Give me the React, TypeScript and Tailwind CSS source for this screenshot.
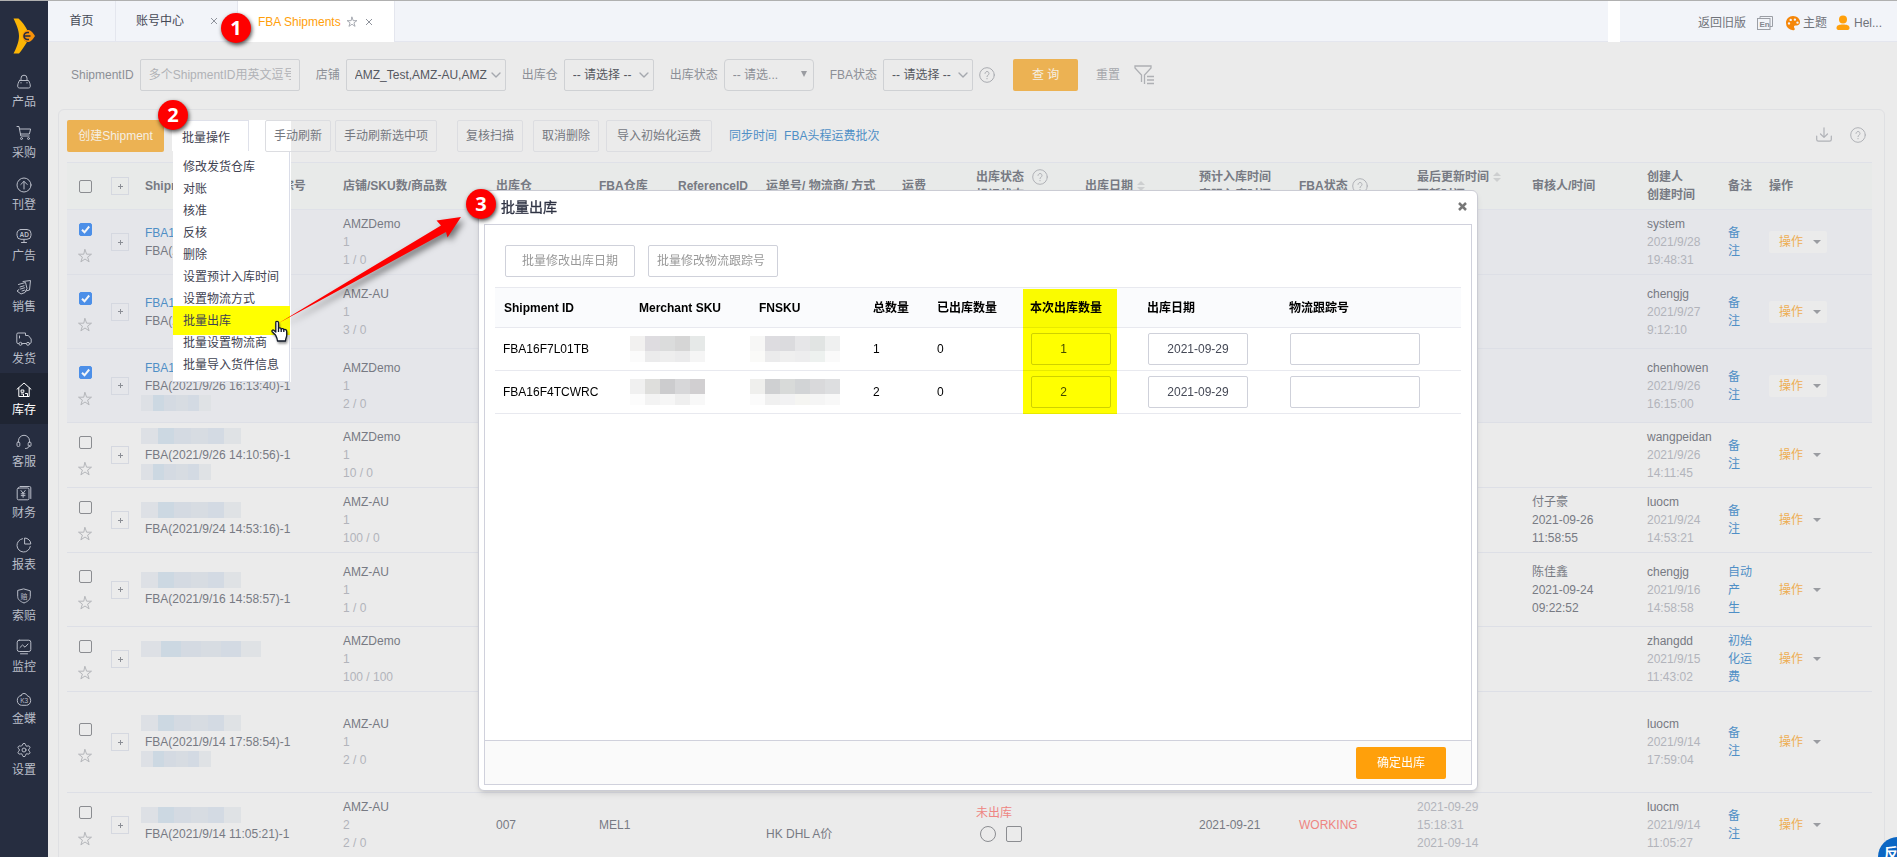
import React from 'react';
import { ChevronDown, Settings } from 'lucide-react';

type IconProps = { className?: string };

const Glyph: React.FC<{ className?: string; children: React.ReactNode }> = ({ className = 'size-4', children }) => (
  <svg viewBox="0 0 16 16" className={className} fill="none" stroke="currentColor" strokeWidth="1" strokeLinecap="round" strokeLinejoin="round" aria-hidden="true">
    {children}
  </svg>
);

const HelpIcon: React.FC<IconProps> = ({ className = 'size-4' }) => (
  <Glyph className={className}>
    <circle cx="8" cy="8" r="7.3" />
    <path d="M6 6.4a2 2 0 1 1 3 1.8c-.7.4-1 .7-1 1.4" />
    <path d="M8 11.4v.4" />
  </Glyph>
);

const StarIcon: React.FC<IconProps> = ({ className = 'size-4' }) => (
  <Glyph className={className}>
    <path d="M8 1.6l1.6 4.6h4.9l-3.9 2.9 1.5 4.7L8 11l-4.1 2.8 1.5-4.7-3.9-2.9h4.9z" />
  </Glyph>
);

const Sorter = () => (
  <svg viewBox="0 0 8 10" className="w-2 h-2.5" fill="#cdcfd0" aria-hidden="true">
    <path d="M4 0l4 4H0zM4 10l4-4H0z" />
  </svg>
);

const menu = [
  { label: '产品', icon: <Glyph><path d="M5 6.5V4.2a3 3 0 0 1 6 0v2.3M3.5 6.500h9c1.300 2.200 1.800 4 1.800 5.700 0 1.300-.8 1.800-1.800 1.800h-9c-1 0-1.800-.5-1.800-1.800 0-1.700.5-3.500 1.800-5.700zM5 8.5v.5M11 8.5v.5" /></Glyph> },
  { label: '采购', icon: <Glyph><path d="M1 1.5h2l1.8 9.5h8.4M3.6 4h11l-1.2 5H4.4" /><circle cx="5.5" cy="13.5" r="1" /><circle cx="12.5" cy="13.5" r="1" /></Glyph> },
  { label: '刊登', icon: <Glyph><circle cx="8" cy="8" r="7" /><path d="M8 12V4.5M4.8 7.5L8 4.3l3.2 3.2" /></Glyph> },
  { label: '广告', icon: <Glyph><path d="M5 1.5h6a4 4 0 0 1 4 4v1.800a4 4 0 0 1-4 4H5a4 4 0 0 1-4-4V5.500a4 4 0 0 1 4-4zM5.500 14.500h5M8 11.500v3" /><text x="3.600" y="9" fontSize="6.500" fontWeight="bold" fill="currentColor" stroke="none">AD</text></Glyph> },
  { label: '销售', icon: <Glyph><path d="M7 2.500l7.500-1-1 9.500-3.500 1M2.500 5.500l7-2 1.500 6-2 4-4 1.500-4-3 2-1.500M4 8l4-1.200M4.500 10l4-1.200M6 12l2.500-.8" /></Glyph> },
  { label: '发货', icon: <Glyph><path d="M2.500 12.500H2A1.200 1.200 0 0 1 .8 11.300V3.200A1.200 1.200 0 0 1 2 2h7.500v2.500h2.800l2.900 3.500v3.300a1.200 1.200 0 0 1-1.200 1.200M6.500 12.500h3.500M3.500 5v2" /><circle cx="4.500" cy="12.800" r="1.500" /><circle cx="12" cy="12.800" r="1.500" /></Glyph> },
  { label: '库存', icon: <Glyph><path d="M1 7.200L8 1l7 6.200M2.800 6v8.500h10.400V6" /><path d="M5.500 8h2.300v2.300H5.500zM5.500 12h2v2M9.500 11.500h2V14" /></Glyph> },
  { label: '客服', icon: <Glyph><path d="M2.500 8V6.800a5.500 5.500 0 0 1 11 0V8M13.500 11.500c-.3 2-1.800 3-4 3" /><rect x="1" y="8" width="2.800" height="4.500" rx="1.200" /><rect x="12.200" y="8" width="2.800" height="4.500" rx="1.200" /></Glyph> },
  { label: '财务', icon: <Glyph><path d="M4 1.500h9.500a1.300 1.300 0 0 1 1.300 1.300v10.700" /><rect x="1.200" y="3" width="11.800" height="11.800" rx="1.300" /><path d="M5 5.500l2.100 2.800 2.100-2.800M7.100 8.300v4M5.200 8.800H9M5.200 10.600H9" /></Glyph> },
  { label: '报表', icon: <Glyph><path d="M6.500 1.700a6.700 6.700 0 1 0 7.800 7.800M9 1a6 6 0 0 1 5.800 6H9z" /></Glyph> },
  { label: '索赔', icon: <Glyph><path d="M8 1l6.300 1.800v5.700c0 3-2.500 5-6.300 6.500-3.800-1.500-6.300-3.500-6.300-6.500V2.800z" /><text x="4.500" y="10.800" fontSize="7" fill="currentColor" stroke="none">赔</text></Glyph> },
  { label: '监控', icon: <Glyph><rect x="1.200" y="1.200" width="13.600" height="11.300" rx="2" /><path d="M4 8.500l2.500-2.500 2.500 2.200L12 5M4.500 14.800h7" /></Glyph> },
  { label: '金蝶', icon: <Glyph><path d="M5 4.500a3.200 3.200 0 0 1 6 0 5 5 0 0 1 3.700 5c0 2.800-2 4.800-4.400 4.800H5.700c-2.400 0-4.400-2-4.400-4.800a5 5 0 0 1 3.700-5z" /><text x="4.200" y="11.500" fontSize="6.500" fill="currentColor" stroke="none">K3</text></Glyph> },
  { label: '设置', icon: <Settings className="size-4" strokeWidth={1.5} /> },
];

const Sidebar = () => (
  <aside className="w-12 shrink-0 bg-[#262d40] text-[#b9bdc8]">
    <a href="#home" aria-label="home" className="flex h-[63px] items-end justify-center pb-2.5">
      <svg viewBox="0 0 24 36" className="w-6 h-9" aria-hidden="true">
        <path d="M1.500.5h5C10 3.500 13 7.500 15.500 12.500c-5 1-6 9.500-.5 11.500C12 29 9.500 32.500 7 35.500H1.500C4 31 7 24 7 18S4 6 1.500.5z" fill="#fbb506" />
        <path d="M17 12c2.800 1.200 4.500 3.500 6 6-1.500 2.500-3.200 4.800-6 6-4 0-6.500-2.500-6.500-6s2.500-6 6.500-6z" fill="#f7920a" />
        <path d="M17 14.500h-1.500a3.500 3.500 0 0 0 0 7H17M12.500 18h6" stroke="#262d40" strokeWidth="1.600" fill="none" />
      </svg>
    </a>
    <nav className="flex h-[720px] flex-col">
      {menu.map((m) => (
        <a
          key={m.label}
          href={`#${m.label}`}
          className={`flex flex-1 flex-col items-center justify-center gap-1 pt-1 ${m.label === '库存' ? 'bg-[#1f2533] text-white' : ''}`}
        >
          {m.icon}
          <span className="leading-4">{m.label}</span>
        </a>
      ))}
    </nav>
  </aside>
);

const TopBar = () => (
  <header className="flex h-[41px] border-b border-[#e4e6ee] bg-[#f2f4f9] text-[#454956]">
    <a href="#tab1" className="flex w-[68px] items-center justify-center border-r border-[#e4e6ee]">首页</a>
    <a href="#tab2" className="flex w-[122px] items-center gap-[26px] border-r border-[#e4e6ee] pl-5">
      账号中心
      <svg viewBox="0 0 8 8" className="size-2 text-[#8f939c]" stroke="currentColor" aria-hidden="true"><path d="M1 1l6 6M7 1L1 7" /></svg>
    </a>
    <a href="#tab3" className="-mb-px flex w-[157px] items-center gap-[5px] border-r border-[#e4e6ee] bg-white pl-5 text-[#ffa00b]">
      FBA Shipments
      <StarIcon className="size-3 text-[#8f939c]" />
      <svg viewBox="0 0 8 8" className="ml-0.5 size-2 text-[#8f939c]" stroke="currentColor" aria-hidden="true"><path d="M1 1l6 6M7 1L1 7" /></svg>
    </a>
    <div className="-mb-px ml-auto w-3 bg-white" />
    <div className="flex w-[277px] items-center pl-[78px] pt-1 text-[#70737a]">
      <a href="#old">返回旧版</a>
      <svg viewBox="0 0 16 14" className="ml-[11px] h-3.5 w-4" fill="none" stroke="#9b9ea5" aria-hidden="true">
        <path d="M3 2.500V.5h12.500v10H13" />
        <rect x=".5" y="2.500" width="12.500" height="11" />
        <text x="2.500" y="11" fontSize="8" fontWeight="bold" fill="#85888f" stroke="none">En</text>
      </svg>
      <svg viewBox="0 0 16 16" className="ml-3 size-4" fill="#f58608" aria-hidden="true">
        <path fillRule="evenodd" d="M8 1c4 0 7 2.800 7 6 0 2.300-1.500 3.500-3.500 3.500-1.800 0-2.500 0-2.500 1.200s.8 1.300.8 2.300S9 15.300 8 15.300A7.100 7.100 0 0 1 1 8c0-4 3-7 7-7zM4 7.200a1.200 1.200 0 1 0 0 2.400 1.200 1.200 0 0 0 0-2.400zm1.700-3.500a1.200 1.200 0 1 0 0 2.400 1.200 1.200 0 0 0 0-2.400zm4.200-.3a1.200 1.200 0 1 0 0 2.400 1.200 1.200 0 0 0 0-2.400zm2.600 3a1.200 1.200 0 1 0 0 2.400 1.200 1.200 0 0 0 0-2.400z" />
      </svg>
      <span className="ml-0.5">主题</span>
      <svg viewBox="0 0 14 16" className="ml-[9px] h-4 w-3.5" fill="#ffa00b" aria-hidden="true">
        <circle cx="7" cy="4.500" r="4" />
        <path d="M.5 13c0-3 3-3.500 6.500-3.500s6.500.5 6.500 3.500c0 1.500-1 2-2.500 2H3C1.500 15 .5 14.500.5 13z" />
      </svg>
      <span className="ml-1">Hel...</span>
    </div>
  </header>
);

const SelectBox: React.FC<{ id: string; value: string; className: string }> = ({ id, value, className }) => (
  <div className={`relative h-8 ${className}`}>
    <select id={id} className="h-full w-full appearance-none rounded-xs border border-[#cfd1d4] pl-2 pr-4 text-[#55585f]">
      <option>{value}</option>
    </select>
    <ChevronDown className="pointer-events-none absolute right-0.5 top-2 size-4 text-[#a5a8ae]" strokeWidth={2} />
  </div>
);

const FilterBar = () => (
  <form className="flex items-center gap-4 pb-[18px] pl-[23px] pt-[17px] text-[#8c8f96]">
    <div className="flex items-center gap-1.5">
      <label htmlFor="sid">ShipmentID</label>
      <input id="sid" placeholder="多个ShipmentID用英文逗号分隔" className="h-8 w-40 rounded-xs border border-[#cfd1d4] px-2 placeholder:text-[#b0b2b6]" />
    </div>
    <div className="flex items-center gap-1.5">
      <label htmlFor="store">店铺</label>
      <SelectBox id="store" value="AMZ_Test,AMZ-AU,AMZ" className="w-40" />
    </div>
    <div className="flex items-center gap-1.5">
      <label htmlFor="whs">出库仓</label>
      <SelectBox id="whs" value="-- 请选择 --" className="w-[90px]" />
    </div>
    <div className="flex items-center gap-1.5">
      <label htmlFor="outState">出库状态</label>
      <div className="relative h-8 w-[90px]">
        <select id="outState" className="h-full w-full appearance-none rounded border border-[#cfd1d4] pl-2 text-[#8c8f96]">
          <option>-- 请选...</option>
        </select>
        <svg viewBox="0 0 6 6" className="pointer-events-none absolute right-[7px] top-3 size-1.5" fill="#9a9ca1" aria-hidden="true"><path d="M0 0h6L3 6z" /></svg>
      </div>
    </div>
    <div className="flex items-center gap-1.5">
      <label htmlFor="fbaState">FBA状态</label>
      <SelectBox id="fbaState" value="-- 请选择 --" className="w-[90px]" />
      <HelpIcon className="size-4 text-[#a9abb0]" />
    </div>
    <button type="button" className="ml-0.5 h-8 w-[65px] rounded-xs bg-[#ecb253] text-[#f5efe4]">查 询</button>
    <button type="button" className="ml-0.5 text-[#a5a7ac]">重置</button>
    <svg viewBox="0 0 20 20" className="-ml-0.5 size-5" fill="none" stroke="#aeb0b4" strokeWidth="1.300" aria-hidden="true">
      <path d="M10.500 19V10l6.500-7V1H1v2l6.500 7v7M13 11.500h7M13 15h7M13 18.500h7" />
    </svg>
  </form>
);

const actions = ['修改发货仓库', '对账', '核准', '反核', '删除', '设置预计入库时间', '设置物流方式', '批量出库', '批量设置物流商', '批量导入货件信息'];

const BatchMenu = () => (
  <div className="relative z-10 ml-2 h-8 w-[77px]">
    <div className="absolute left-px top-0 h-[262px] w-[118px] bg-white" />
    <button type="button" className="relative h-[31px] w-full border-r border-t border-[#dfe1ea] bg-white pl-[10px] pt-1 text-left text-[#3f4352]">
      批量操作
    </button>
    <ul className="absolute left-px top-[31px] h-[231px] w-[117px] border-b border-r border-[#dadde8] bg-white pt-[5px] text-[#3f4352]">
      <li className="absolute -right-px left-0 top-[155px] h-[29px] bg-[#ffff00]" />
      {actions.map((a) => (
        <li key={a} className="relative h-[22px] whitespace-nowrap pl-2.5 leading-[22px]">{a}</li>
      ))}
    </ul>
  </div>
);

const toolBtn = 'h-8 rounded-xs border border-[#dcdde1] px-2 text-[#75787f]';

const Toolbar = () => (
  <div className="flex h-[42px] items-start">
    <button type="button" className="h-8 w-[97px] rounded-xs bg-[#ecb253] text-[#f5efe4]">创建Shipment</button>
    <BatchMenu />
    <button type="button" className={`${toolBtn} relative z-10 ml-4`}>手动刷新</button>
    <button type="button" className={`${toolBtn} ml-1`}>手动刷新选中项</button>
    <button type="button" className={`${toolBtn} ml-5`}>复核扫描</button>
    <button type="button" className={`${toolBtn} ml-2.5`}>取消删除</button>
    <button type="button" className={`${toolBtn} ml-[7px] w-[106px]`}>导入初始化运费</button>
    <div className="flex h-8 items-center text-[#4f8fc6]">
      <a href="#sync" className="ml-[17px]">同步时间</a>
      <a href="#batch" className="ml-[7px]">FBA头程运费批次</a>
    </div>
    <div className="ml-auto mr-1.5 mt-[7px] flex gap-[18px] text-[#b0b2b7]">
      <Glyph><path d="M8 .8v9.400M4.500 7L8 10.400 11.500 7M.7 9v3.500c0 1 .7 1.700 1.700 1.700h11.200c1 0 1.700-.7 1.700-1.700V9" strokeWidth="1.200" /></Glyph>
      <HelpIcon />
    </div>
  </div>
);

const blur = ['bg-[#dde0e5]', 'bg-[#ccd8e2]', 'bg-[#d4dae2]', 'bg-[#d7dce2]', 'bg-[#d3dae3]', 'bg-[#dfe2e5]'];

const Mask: React.FC<{ className: string }> = ({ className }) => (
  <div className={`-ml-1 flex ${className}`}>
    {blur.map((c) => <i key={c} className={`flex-1 ${c}`} />)}
  </div>
);

const top = <Mask className="h-4 w-[100px]" />;
const bottom = <Mask className="h-4 w-[70px]" />;
const link = <span className="text-[#4f8fc6]">FBA16F7L01TB</span>;

type Row = {
  height: string;
  checked?: boolean;
  fba: React.ReactNode[];
  store: string[];
  audit?: string[];
  creator: string[];
  note: string[];
  last?: boolean;
};

const rows: Row[] = [
  { height: 'h-[65px]', checked: true, fba: [link, 'FBA(2021/9/28 19:45:12)-1'], store: ['AMZDemo', '1', '1 / 0'], creator: ['system', '2021/9/28', '19:48:31'], note: ['备', '注'] },
  { height: 'h-[74px]', checked: true, fba: [link, 'FBA(2021/9/27 9:10:20)-1'], store: ['AMZ-AU', '1', '3 / 0'], creator: ['chengjg', '2021/9/27', '9:12:10'], note: ['备', '注'] },
  { height: 'h-[74px]', checked: true, fba: [link, 'FBA(2021/9/26 16:13:40)-1', bottom], store: ['AMZDemo', '1', '2 / 0'], creator: ['chenhowen', '2021/9/26', '16:15:00'], note: ['备', '注'] },
  { height: 'h-[65px]', fba: [top, 'FBA(2021/9/26 14:10:56)-1', bottom], store: ['AMZDemo', '1', '10 / 0'], creator: ['wangpeidan', '2021/9/26', '14:11:45'], note: ['备', '注'] },
  { height: 'h-[65px]', fba: [top, 'FBA(2021/9/24 14:53:16)-1'], store: ['AMZ-AU', '1', '100 / 0'], audit: ['付子豪', '2021-09-26', '11:58:55'], creator: ['luocm', '2021/9/24', '14:53:21'], note: ['备', '注'] },
  { height: 'h-[74px]', fba: [top, 'FBA(2021/9/16 14:58:57)-1'], store: ['AMZ-AU', '1', '1 / 0'], audit: ['陈佳鑫', '2021-09-24', '09:22:52'], creator: ['chengjg', '2021/9/16', '14:58:58'], note: ['自动', '产', '生'] },
  { height: 'h-[65px]', fba: [<Mask className="h-4 w-[120px]" />, ''], store: ['AMZDemo', '1', '100 / 100'], creator: ['zhangdd', '2021/9/15', '11:43:02'], note: ['初始', '化运', '费'] },
  { height: 'h-[101px]', fba: [top, 'FBA(2021/9/14 17:58:54)-1', bottom], store: ['AMZ-AU', '1', '2 / 0'], creator: ['luocm', '2021/9/14', '17:59:04'], note: ['备', '注'] },
  { height: 'h-[65px]', fba: [top, 'FBA(2021/9/14 11:05:21)-1'], store: ['AMZ-AU', '2', '2 / 0'], creator: ['luocm', '2021/9/14', '11:05:27'], note: ['备', '注'], last: true },
];

const Lines: React.FC<{ items: React.ReactNode[]; className?: string }> = ({ items, className = '' }) => (
  <>
    {items.map((t, i) => <div key={i} className={`h-[18px] whitespace-nowrap ${className}`}>{t}</div>)}
  </>
);

const PlusButton = () => (
  <button type="button" aria-label="expand" className="flex size-[18px] items-center justify-center border border-[#d5d8e0] text-[#8c8f96]">
    <svg viewBox="0 0 7 7" className="size-[7px]" stroke="currentColor" aria-hidden="true"><path d="M3.500 1v5M1 3.500h5" /></svg>
  </button>
);

const box = 'block size-[13px] appearance-none rounded-xs border border-[#8b8d91]';

const CheckBox: React.FC<{ checked?: boolean; label: string }> = ({ checked, label }) => (
  <div className="relative size-[13px]">
    <input type="checkbox" aria-label={label} defaultChecked={checked} className={`${box} checked:border-[#4c8fe8] checked:bg-[#4c8fe8]`} />
    {checked && (
      <svg viewBox="0 0 13 13" className="pointer-events-none absolute inset-0" fill="none" stroke="#f3f5f8" strokeWidth="2" aria-hidden="true"><path d="M3 6.800l2.500 2.500L10.200 3.500" /></svg>
    )}
  </div>
);

const ShipmentTable = () => (
  <table className="w-full table-fixed border-t border-[#dfe1e8] text-left text-[#777a83]">
    <colgroup>
      <col className="w-[34px]" /><col className="w-[34px]" /><col className="w-[198px]" /><col className="w-[153px]" />
      <col className="w-[103px]" /><col className="w-[79px]" /><col className="w-[88px]" /><col className="w-[136px]" />
      <col className="w-[74px]" /><col className="w-[109px]" /><col className="w-[114px]" /><col className="w-[100px]" />
      <col className="w-[118px]" /><col className="w-[115px]" /><col className="w-[115px]" /><col className="w-[81px]" />
      <col className="w-[41px]" /><col className="w-[113px]" />
    </colgroup>
    <thead>
      <tr className="h-[47px] border-b border-[#dfe1e8] bg-[#e8eae9] whitespace-nowrap [&>th]:p-0 [&>th]:pl-2.5">
        <th><div className="pl-0.5"><CheckBox label="all" /></div></th>
        <th><PlusButton /></th>
        <th>ShipmentID/ 货件名称/追踪号</th>
        <th>店铺/SKU数/商品数</th>
        <th>出库仓</th>
        <th>FBA仓库</th>
        <th>ReferenceID</th>
        <th>运单号/ 物流商/ 方式</th>
        <th>运费</th>
        <th>
          <div className="flex h-[18px] items-center gap-2">出库状态<HelpIcon className="size-4 text-[#b0b2b7]" /></div>
          <div className="h-[18px]">标记状态</div>
        </th>
        <th><div className="flex items-center gap-1">出库日期<Sorter /></div></th>
        <th>预计入库时间<br />实际入库时间</th>
        <th><div className="flex items-center gap-1">FBA状态<HelpIcon className="size-4 text-[#b0b2b7]" /></div></th>
        <th>
          <div className="flex items-center gap-1">最后更新时间<Sorter /></div>
          <div className="flex items-center gap-1">更新时间<Sorter /></div>
        </th>
        <th>审核人/时间</th>
        <th>创建人<br />创建时间</th>
        <th>备注</th>
        <th>操作</th>
      </tr>
    </thead>
    <tbody>
      {rows.map((r, i) => (
        <tr key={i} className={`${r.height} border-b border-[#dddfe6] [&>td]:p-0 [&>td]:pl-2.5 ${r.checked ? 'bg-[#e5e6ea]' : ''}`}>
          <td>
            <div className="flex flex-col gap-3 pl-0.5 pt-0.5">
              <CheckBox checked={r.checked} label={`row ${i + 1}`} />
              <StarIcon className="-ml-0.5 size-4 text-[#b4b6ba]" />
            </div>
          </td>
          <td><PlusButton /></td>
          <td><Lines items={r.fba} /></td>
          <td>
            <Lines items={r.store.slice(0, 1)} />
            <Lines items={r.store.slice(1)} className="text-[#b2b4bb]" />
          </td>
          <td>{r.last && '007'}</td>
          <td>{r.last && 'MEL1'}</td>
          <td />
          <td>{r.last && <Lines items={['', 'HK DHL A价']} />}</td>
          <td />
          <td>
            {r.last && (
              <>
                <div className="leading-[18px] text-[#ee8582]">未出库</div>
                <div className="flex gap-2.5 pb-1 pl-1 pt-1">
                  <input type="radio" aria-label="标记" className="size-4 appearance-none rounded-full border border-[#8b8d91]" />
                  <input type="checkbox" aria-label="选择" className="size-4 appearance-none rounded-xs border border-[#8b8d91]" />
                </div>
              </>
            )}
          </td>
          <td />
          <td>{r.last && '2021-09-21'}</td>
          <td className="text-[#ee8582]">{r.last && 'WORKING'}</td>
          <td className="text-[#b2b4bb]">{r.last && <Lines items={['2021-09-29', '15:18:31', '2021-09-14']} />}</td>
          <td>{r.audit && <Lines items={r.audit} />}</td>
          <td>
            <Lines items={r.creator.slice(0, 1)} />
            <Lines items={r.creator.slice(1)} className="text-[#b2b4bb]" />
          </td>
          <td><a href="#note" className="text-[#4f8fc6]"><Lines items={r.note} /></a></td>
          <td>
            <button type="button" className="flex h-[22px] w-[58px] items-center gap-2.5 rounded-xs bg-[#ebebeb] pl-2.5 text-[#eeae52]">
              操作
              <svg viewBox="0 0 8 4" className="h-1 w-2 shrink-0" fill="#9a9ca1" aria-hidden="true"><path d="M0 0h8L4 4z" /></svg>
            </button>
          </td>
        </tr>
      ))}
    </tbody>
  </table>
);

const skuMasks = [
  {
    sku: [['bg-[#f2f1f0]', 'bg-[#dedce0]', 'bg-[#dbdcdc]', 'bg-[#d6d6d6]', 'bg-[#e6e9e8]'], ['bg-[#fbfbfb]', 'bg-[#ebebec]', 'bg-[#eeeeee]', 'bg-[#ebebec]', 'bg-[#f5f5f5]']],
    fn: [['bg-[#f7f7f6]', 'bg-[#dddce0]', 'bg-[#dbdbde]', 'bg-[#e6e6e8]', 'bg-[#e1e4e3]', 'bg-[#eff0f0]'], ['bg-[#fafaf8]', 'bg-[#ebebec]', 'bg-[#efefef]', 'bg-[#ededee]', 'bg-[#edf1ef]', 'bg-[#fafafa]']],
  },
  {
    sku: [['bg-[#f0f0f0]', 'bg-[#dededc]', 'bg-[#ccccce]', 'bg-[#d7d7d9]', 'bg-[#d1cfd1]'], ['bg-[#fcfcfc]', 'bg-[#f3f3f3]', 'bg-[#f6f6f6]', 'bg-[#efefef]', 'bg-[#f8f8f8]']],
    fn: [['bg-[#efefed]', 'bg-[#cfd0d2]', 'bg-[#d8dad9]', 'bg-[#d2d4d6]', 'bg-[#d9d9db]', 'bg-[#dddee0]'], ['bg-[#fbfbfb]', 'bg-[#f0f0f0]', 'bg-[#f2f2f3]', 'bg-[#f5f5f2]', 'bg-[#f5f5f5]', 'bg-[#f8f8f8]']],
  },
];

const Pixels: React.FC<{ data: string[][] }> = ({ data }) => (
  <div>
    {data.map((line, i) => (
      <div key={i} className={`flex ${i === 0 ? 'h-[15px]' : 'h-[11px]'}`}>
        {line.map((c, j) => <i key={j} className={`w-[15px] ${c}`} />)}
      </div>
    ))}
  </div>
);

const shipments = [
  { id: 'FBA16F7L01TB', total: 1 },
  { id: 'FBA16F4TCWRC', total: 2 },
];

const field = 'h-8 rounded-xs border border-[#cfd1da]';

const BatchOutDialog = () => (
  <section role="dialog" aria-label="批量出库" className="absolute bottom-[66px] left-[478px] right-[419px] top-[189px] z-20 flex flex-col rounded-md border border-[#cbccd4] bg-white px-[5px] pb-[5px] shadow-md">
    <div className="flex h-[33px] shrink-0 items-center justify-between pb-0.5 pl-[17px] pr-[5px]">
      <h2 className="text-sm text-[#2f3344] [-webkit-text-stroke:0.3px]">批量出库</h2>
      <button type="button" aria-label="close">
        <svg viewBox="0 0 9 9" className="size-[9px]" stroke="#777777" strokeWidth="2.500" aria-hidden="true"><path d="M1 1l7 7M8 1L1 8" /></svg>
      </button>
    </div>
    <div className="flex flex-1 flex-col border border-[#d0d1dc]">
      <div className="flex-1 px-2.5 pt-5">
        <div className="flex gap-[13px] pb-2.5 pl-2.5">
          <button type="button" className={`${field} w-[130px] text-[#999999]`}>批量修改出库日期</button>
          <button type="button" className={`${field} w-[130px] pr-1 text-[#999999]`}>批量修改物流跟踪号</button>
        </div>
        <div className="relative">
          <table className="w-full table-fixed text-left text-black">
            <colgroup>
              <col className="w-[135px]" /><col className="w-[120px]" /><col className="w-[114px]" /><col className="w-[64px]" />
              <col className="w-[93px]" /><col className="w-[117px]" /><col className="w-[142px]" /><col className="w-[181px]" />
            </colgroup>
            <thead>
              <tr className="h-10 border-y border-[#e8e9ef] bg-[#fafbfd] [&>th]:p-0 [&>th]:pl-[9px]">
                <th>Shipment ID</th><th>Merchant SKU</th><th>FNSKU</th><th>总数量</th>
                <th>已出库数量</th><th>本次出库数量</th><th>出库日期</th><th>物流跟踪号</th>
              </tr>
            </thead>
            <tbody>
              {shipments.map((s, i) => (
                <tr key={s.id} className="h-[43px] border-b border-[#e8e9ef] [&>td]:p-0">
                  <td><div className="pl-2">{s.id}</div></td>
                  <td><Pixels data={skuMasks[i].sku} /></td>
                  <td><Pixels data={skuMasks[i].fn} /></td>
                  <td><div className="pl-[9px]">{s.total}</div></td>
                  <td><div className="pl-[9px]">0</div></td>
                  <td><div className="pl-2.5"><input type="number" aria-label="本次出库数量" defaultValue={s.total} className={`${field} block w-20 text-center text-[#454956]`} /></div></td>
                  <td><div className="pl-2.5"><input type="text" aria-label="出库日期" defaultValue="2021-09-29" className={`${field} block w-[100px] text-center text-[#454956]`} /></div></td>
                  <td><div className="pl-2.5"><input type="text" aria-label="物流跟踪号" className={`${field} block w-[130px] px-2`} /></div></td>
                </tr>
              ))}
            </tbody>
          </table>
          <div className="pointer-events-none absolute bottom-0 left-[528px] top-0.5 w-[94px] bg-[#ffff00] mix-blend-multiply" />
        </div>
      </div>
      <div className="flex h-[44px] shrink-0 items-center justify-end border-t border-[#d0d1dc] bg-[#fafafa] pr-[25px]">
        <button type="button" className="h-8 w-[90px] rounded-xs bg-[#ffa00b] text-white">确定出库</button>
      </div>
    </div>
  </section>
);

const Badge: React.FC<{ n: number; className: string }> = ({ n, className }) => (
  <span className={`absolute z-30 flex size-[30px] items-center justify-center rounded-full bg-[#fe0000] font-['Open_Sans'] text-xl font-bold text-white shadow-[1px_2px_4px_rgba(0,0,0,0.7)] ${className}`}>
    {n}
  </span>
);

const Annotations = () => (
  <>
    <Badge n={1} className="left-[221px] top-3" />
    <Badge n={2} className="left-[158px] top-[99px]" />
    <Badge n={3} className="left-[466px] top-[188px]" />
    <svg viewBox="0 0 220 150" className="pointer-events-none absolute left-[265px] top-[204px] z-30 h-[150px] w-[220px] drop-shadow-[3px_4px_3px_rgba(0,0,0,0.5)]" aria-hidden="true">
      <path d="M196 12l-24.500 3.500 4.500 5L13 118.500 181 27l1.500 5.500z" fill="#fe0000" />
    </svg>
    <svg viewBox="0 0 18 24" className="pointer-events-none absolute left-[271px] top-[319px] z-30 h-6 w-[18px] drop-shadow-[1px_2px_1px_rgba(0,0,0,0.4)]" fill="#ffffff" stroke="#111827" strokeWidth="1.300" strokeLinejoin="round" aria-hidden="true">
      <path d="M4.500 15L1.200 11.800c-.9-1 .5-2.300 1.600-1.500L4.800 12V2.500c0-1.600 2.700-1.600 2.700 0v6c.5-1 2.500-.8 2.700.5.600-.8 2.400-.5 2.600.8.800-.7 2.900-.3 2.900 1.500v4.200c0 1.500-1.200 3-1.200 5.500H6.500c0-2.500-1-4-2-6z" />
      <path d="M7.500 8.500v3.500M10.200 9v3M12.800 9.800V12" />
    </svg>
  </>
);

export default function App() {
  return (
    <div className="relative h-screen overflow-hidden border-t border-[#b0b0b0] bg-[#ebebeb] font-['Liberation_Sans','Noto_Sans_CJK_SC',sans-serif] text-xs leading-[18px]">
      <div className="flex h-full">
        <Sidebar />
        <div className="min-w-0 flex-1">
          <TopBar />
          <FilterBar />
          <main className="ml-2.5 mr-3 h-full rounded-md border border-[#dfe0e3] pl-2 pr-3 pt-2.5">
            <Toolbar />
            <ShipmentTable />
          </main>
        </div>
      </div>
      <BatchOutDialog />
      <Annotations />
      <button type="button" className="absolute -bottom-5 -right-[21px] z-30 flex size-10 items-start justify-center whitespace-nowrap rounded-full bg-[#0b66c3] pt-1.5 text-sm font-bold text-white">反馈</button>
    </div>
  );
}
